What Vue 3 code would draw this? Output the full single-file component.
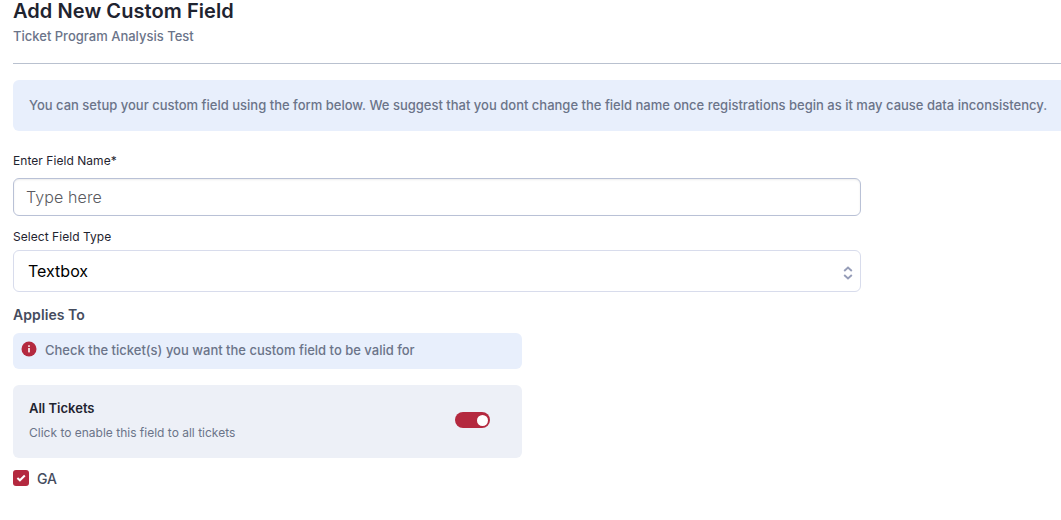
<template>
  <div class="custom-field">
    <header class="page-header">
      <h1>Add New Custom Field</h1>
      <p>Ticket Program Analysis Test</p>
    </header>

    <div class="notice">
      You can setup your custom field using the form below. We suggest that you dont change the
      field name once registrations begin as it may cause data inconsistency.
    </div>

    <form class="field-form" @submit.prevent>
      <label for="fieldName">Enter Field Name*</label>
      <input id="fieldName" v-model="fieldName" type="text" placeholder="Type here" />

      <label for="fieldType" class="type-label">Select Field Type</label>
      <div class="select-box">
        <select id="fieldType" v-model="fieldType">
          <option v-for="type in fieldTypes" :key="type" :value="type">{{ type }}</option>
        </select>
        <svg class="select-arrows" width="10" height="14" viewBox="0 0 10 14">
          <path d="M1.2 5 5 1.6 8.8 5M1.2 9 5 12.4 8.8 9" />
        </svg>
      </div>
    </form>

    <section class="applies">
      <h2>Applies To</h2>
      <div class="hint">
        <svg width="16" height="16" viewBox="0 0 16 16">
          <circle cx="8" cy="8" r="7.5" fill="#b4293f" />
          <rect x="7.2" y="4.3" width="1.6" height="1.6" fill="#fff" />
          <rect x="7.2" y="7" width="1.6" height="4.4" fill="#fff" />
        </svg>
        <span>Check the ticket(s) you want the custom field to be valid for</span>
      </div>

      <div class="all-tickets">
        <div class="all-tickets-text">
          <h3>All Tickets</h3>
          <p>Click to enable this field to all tickets</p>
        </div>
        <button
          type="button"
          class="toggle"
          :class="{ on: allTickets }"
          role="switch"
          aria-label="All Tickets"
          :aria-checked="allTickets"
          @click="toggleAll"
        ></button>
      </div>

      <label v-for="ticket in tickets" :key="ticket.name" class="ticket">
        <input v-model="ticket.checked" type="checkbox" />
        <span class="check">
          <svg v-if="ticket.checked" width="16" height="16" viewBox="0 0 16 16">
            <path d="M4.4 8 6.9 10.3 11.8 5.5" />
          </svg>
        </span>
        <span>{{ ticket.name }}</span>
      </label>
    </section>
  </div>
</template>

<script setup>
import { ref } from 'vue'

const fieldName = ref('')
const fieldType = ref('Textbox')
const fieldTypes = ['Textbox']

const allTickets = ref(true)
const tickets = ref([{ name: 'GA', checked: true }])

const toggleAll = () => {
  allTickets.value = !allTickets.value
  tickets.value.forEach((ticket) => {
    ticket.checked = allTickets.value
  })
}
</script>

<style>
body {
  background: #fff;
  overflow: hidden;
}
</style>

<style scoped>
* {
  margin: 0;
  padding: 0;
  box-sizing: border-box;
  font-family: Inter, sans-serif;
}

.custom-field {
  height: 520px;
  padding-left: 13px;
  color: #1f2430;
}

.page-header {
  height: 64px;
  border-bottom: 1px solid #b9c1cf;
}

.page-header h1 {
  font-size: 20px;
  line-height: 22px;
  font-weight: 600;
  letter-spacing: 0.07px;
}

.page-header p {
  margin-top: 4px;
  font-size: 13px;
  line-height: 20px;
  font-weight: 500;
  color: #6b7489;
}

.notice {
  height: 51px;
  margin-top: 16px;
  padding-left: 16px;
  border-radius: 6px 0 0 6px;
  background: #e8effc;
  font-size: 13px;
  line-height: 51px;
  font-weight: 500;
  color: #6b7489;
  white-space: nowrap;
}

.field-form {
  display: flex;
  flex-direction: column;
  width: 848px;
  margin-top: 21px;
}

.field-form label {
  font-size: 12px;
  line-height: 18px;
  letter-spacing: 0.05px;
}

.field-form input {
  height: 38px;
  margin-top: 8px;
  padding: 0 12px;
  border: 1px solid #b9c1d6;
  border-radius: 6px;
  box-shadow: inset 0 1px 2px rgba(0, 0, 0, 0.08);
  font-size: 16px;
  font-weight: 300;
  letter-spacing: 0.12px;
  outline: none;
}

.field-form input::placeholder {
  color: #5a5a5f;
}

.field-form .type-label {
  margin-top: 12px;
}

.select-box {
  position: relative;
  height: 42px;
  margin-top: 4px;
}

.select-box select {
  width: 100%;
  height: 100%;
  padding: 0 14px;
  border: 1px solid #d8dcec;
  border-radius: 6px;
  background: #fff;
  font-size: 16px;
  color: #000;
  appearance: none;
}

.select-arrows {
  position: absolute;
  top: 16px;
  right: 8px;
  fill: none;
  stroke: #969db8;
  stroke-width: 1.9;
  pointer-events: none;
}

.applies {
  width: 509px;
  margin-top: 13px;
}

.applies h2 {
  font-size: 14px;
  line-height: 20px;
  font-weight: 600;
  letter-spacing: 0.08px;
  color: #454c5e;
}

.hint {
  display: flex;
  align-items: center;
  gap: 8px;
  height: 36px;
  margin-top: 8px;
  padding: 0 8px 2px;
  border-radius: 6px;
  background: #e8effc;
  font-size: 13px;
  font-weight: 500;
  color: #6b7489;
}

.hint svg {
  margin-top: -2px;
}

.all-tickets {
  display: flex;
  justify-content: space-between;
  height: 73px;
  margin-top: 16px;
  padding: 13px 32px 0 16px;
  border-radius: 6px;
  background: #edf0f7;
}

.all-tickets h3 {
  font-size: 13px;
  line-height: 20px;
  font-weight: 600;
}

.all-tickets p {
  margin-top: 6px;
  font-size: 12px;
  line-height: 18px;
  color: #6b7489;
}

.toggle {
  width: 35px;
  height: 16px;
  margin-top: 14px;
  padding: 0 2px;
  border: none;
  border-radius: 8px;
  background: #b9c1cf;
  cursor: pointer;
  display: flex;
  align-items: center;
}

.toggle::after {
  content: '';
  width: 11px;
  height: 11px;
  border-radius: 50%;
  background: #fff;
}

.toggle.on {
  justify-content: flex-end;
  background: #b4293f;
}

.ticket {
  display: flex;
  align-items: center;
  gap: 8px;
  width: max-content;
  margin-top: 11px;
  font-size: 14px;
  line-height: 20px;
  font-weight: 500;
  color: #454c5e;
}

.ticket input {
  position: absolute;
  opacity: 0;
}

.check {
  width: 16px;
  height: 16px;
  margin-top: -2px;
  border-radius: 3px;
  background: #b4293f;
}

.check svg {
  display: block;
  fill: none;
  stroke: #fff;
  stroke-width: 2;
}
</style>
